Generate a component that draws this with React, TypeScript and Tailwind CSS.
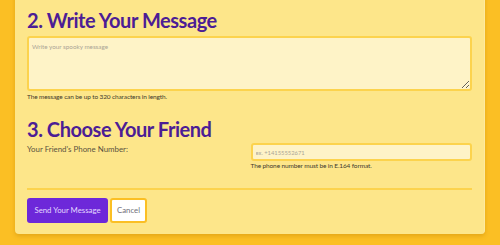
import React from 'react';

const App: React.FC = () => {
  return (
    <div className="h-[245px] w-[500px] overflow-hidden bg-[#fbbf24] font-['Lato','Liberation_Sans',sans-serif]">
      <div className="mx-[15px] -mt-[10px] rounded-[4px] border-r border-[#fdeaa0] bg-[#fde68a] px-[12px] pt-[18px] pb-[11px] shadow-[0_2px_4px_rgba(180,120,0,0.35)]">
        <h2 className="text-[20px] font-bold leading-[24px] tracking-[-0.45px] text-[#4c1d95]">2. Write Your Message</h2>
        <textarea
          placeholder="Write your spooky message"
          className="mt-[4px] block h-[55px] w-full resize-y rounded-[3px] border-2 border-[#fcd34d] bg-[#fef3c7] px-[3px] py-[4px] text-[6.3px] leading-[9px] text-gray-700 placeholder:text-[#aba596] focus:outline-none"
        />
        <p className="mt-[1px] text-[6.5px] leading-[10px] tracking-[-0.12px] text-[#3f3a2e]">
          The message can be up to 320 characters in length.
        </p>

        <h2 className="mt-[15px] text-[20px] font-bold leading-[24px] tracking-[-0.45px] text-[#4c1d95]">3. Choose Your Friend</h2>
        <div className="mt-[2px] grid grid-cols-2 gap-[2px]">
          <label className="text-[7.9px] leading-[12px] text-[#5a5240]">Your Friend's Phone Number:</label>
          <div>
            <input
              type="text"
              placeholder="ex. +14155552671"
              className="block h-[18px] w-full rounded-[3px] border-2 border-[#fcd34d] bg-[#fef3c7] px-[3px] text-[5.8px] text-gray-700 placeholder:text-[#aba596] focus:outline-none"
            />
            <p className="text-[6.5px] leading-[10px] tracking-[-0.12px] text-[#3f3a2e]">The phone number must be in E.164 format.</p>
          </div>
        </div>

        <div className="mt-[17px] h-[2px] bg-[#fcd34d]" />

        <div className="mt-[8px] flex gap-[2px]">
          <button className="h-[25px] w-[81px] rounded-[3px] bg-[#6d28d9] text-[7.8px] text-[#e4d8ff]">
            Send Your Message
          </button>
          <button className="h-[25px] w-[37px] rounded-[3px] border-2 border-[#fbbf24] bg-white text-[7.8px] text-[#71717a]">
            Cancel
          </button>
        </div>
      </div>
    </div>
  );
};

export default App;
